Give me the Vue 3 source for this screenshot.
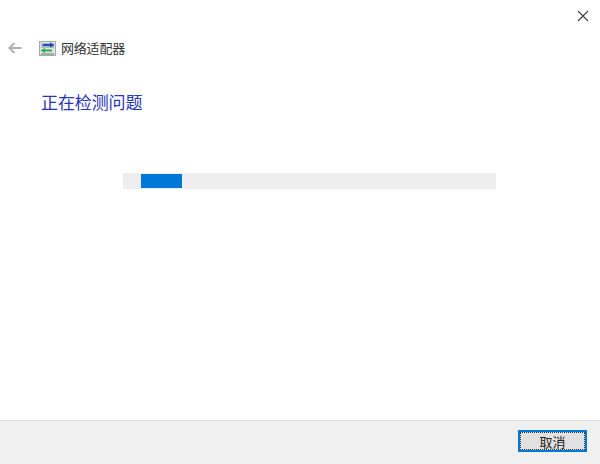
<script setup>
const title = '网络适配器'
const heading = '正在检测问题'
</script>

<template>
  <div class="dialog">
    <div class="topbar">
      <button class="close" aria-label="关闭">
        <svg width="12" height="12" viewBox="0 0 12 12">
          <path d="M1 1 L11 11 M11 1 L1 11" stroke="#404040" stroke-width="1.1" fill="none" />
        </svg>
      </button>
    </div>
    <div class="nav">
      <svg class="back" width="14" height="12" viewBox="0 0 14 12">
        <path d="M1.5 6 H13.5 M6.5 1 L1.5 6 L6.5 11" stroke="#b0b0b0" stroke-width="2" fill="none" />
      </svg>
      <svg class="app-icon" width="17" height="15" viewBox="0 0 17 15">
        <rect x="0.5" y="0.5" width="16" height="14" fill="#dfe3e6" stroke="#a4a9ad" />
        <rect x="2" y="2" width="13" height="5" fill="#aebccb" />
        <path d="M4 3 H11 V1.5 L15.5 4 L11 6.5 V5 H4 Z" fill="#1b4cb0" />
        <path d="M13 8.5 H6 V7 L1.5 9.5 L6 12 V10.5 H13 Z" fill="#2bb04a" />
        <rect x="2" y="12.5" width="13" height="1" fill="#6b7176" />
      </svg>
      <span class="nav-title">{{ title }}</span>
    </div>
    <h1 class="heading">{{ heading }}</h1>
    <div class="track-wrap">
      <div class="track"><div class="bar"></div></div>
    </div>
    <div class="spacer"></div>
    <div class="footer">
      <button class="cancel"><span class="focus">取消</span></button>
    </div>
  </div>
</template>

<style>
html, body { margin: 0; background: #fff; }
</style>

<style scoped>
.dialog {
  width: 600px;
  height: 464px;
  display: flex;
  flex-direction: column;
  background: #fff;
  font-family: "Noto Sans CJK SC", "Liberation Sans", sans-serif;
  overflow: hidden;
}
.topbar {
  height: 30px;
  display: flex;
  justify-content: flex-end;
  align-items: flex-start;
  padding-right: 11px;
  box-sizing: border-box;
}
.close {
  border: 0;
  background: none;
  padding: 0;
  margin-top: 10px;
  width: 12px;
  height: 12px;
  display: block;
}
.close svg { display: block; }
.nav {
  height: 20px;
  margin-top: 8px;
  display: flex;
  align-items: center;
  padding-left: 8px;
  color: #333;
  font-size: 13px;
}
.back { flex: none; }
.app-icon { margin-left: 17px; flex: none; }
.nav-title { margin-left: 5px; line-height: 20px; letter-spacing: -0.2px; }
.heading {
  margin: 32px 0 0 41px;
  font-size: 17px;
  font-weight: 400;
  line-height: 24px;
  letter-spacing: -0.1px;
  color: #2a35b5;
}
.track-wrap { margin-top: 59px; padding-left: 123px; }
.track {
  width: 373px;
  height: 16px;
  background: #eeeeee;
}
.bar {
  width: 41px;
  height: 14px;
  margin-left: 18px;
  position: relative;
  top: 1px;
  background: #0078d7;
}
.spacer { flex: 1; }
.footer {
  height: 44px;
  background: #f0f0f0;
  border-top: 1px solid #dcdcdc;
  box-sizing: border-box;
  display: flex;
  align-items: flex-start;
  justify-content: flex-end;
  padding: 9px 13px 0 0;
}
.cancel {
  width: 69px;
  height: 22px;
  padding: 0;
  border: 2px solid #0078d7;
  background: #e1e1e1;
  box-sizing: border-box;
  font: inherit;
  font-size: 13px;
  color: #222;
}
.focus {
  display: flex;
  align-items: center;
  justify-content: center;
  height: 100%;
  box-sizing: border-box;
  border: 1px dotted #333;
  line-height: 1;
}
</style>
